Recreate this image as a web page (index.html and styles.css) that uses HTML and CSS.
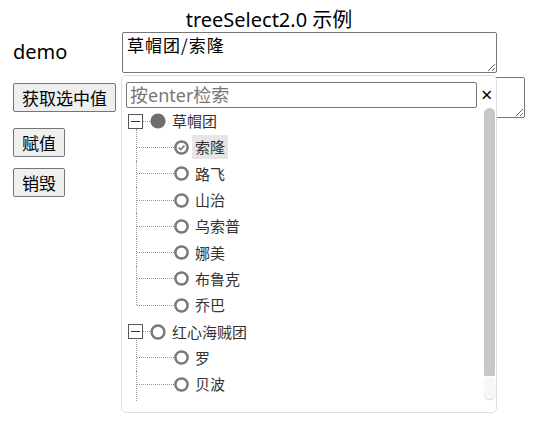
FILE: index.html
```html
<!DOCTYPE html>
<html lang="zh">
<head>
<meta charset="utf-8">
<title>treeSelect2.0 示例</title>
<link rel="stylesheet" href="styles.css">
</head>
<body>
<h1 class="title">treeSelect2.0 示例</h1>
<div class="main">
  <div class="side">
    <div class="label">demo</div>
    <button class="btn btn-get">获取选中值</button>
    <button class="btn btn-set">赋值</button>
    <button class="btn btn-destroy">销毁</button>
  </div>
  <div class="fields">
    <textarea class="area area-1">草帽团/索隆</textarea>
    <textarea class="area area-2"></textarea>
    <div class="dropdown">
      <div class="search">
        <input class="search-input" type="text" placeholder="按enter检索">
        <span class="close">×</span>
      </div>
      <div class="list-wrap">
        <div class="list">
          <ul class="tree">
            <li class="group">
              <div class="row">
                <span class="switch"></span><span class="hconn-top"></span>
                <svg class="dot" width="16" height="16" viewBox="0 0 16 16"><circle cx="8" cy="8" r="7.6" fill="#6e6e6e"/></svg>
                <span class="text">草帽团</span>
              </div>
              <ul class="children">
                <li class="child"><div class="row"><span class="hconn"></span><svg class="radio" width="15" height="15" viewBox="0 0 15 15"><circle cx="7.5" cy="7.5" r="6.1" fill="none" stroke="#7a7a7a" stroke-width="2.5"/><path d="M4.6 7.6 L6.7 9.6 L10.4 5.7" fill="none" stroke="#7a7a7a" stroke-width="1.7"/></svg><span class="text selected">索隆</span></div></li>
                <li class="child"><div class="row"><span class="hconn"></span><svg class="radio" width="15" height="15" viewBox="0 0 15 15"><circle cx="7.5" cy="7.5" r="6.1" fill="none" stroke="#7a7a7a" stroke-width="2.5"/></svg><span class="text">路飞</span></div></li>
                <li class="child"><div class="row"><span class="hconn"></span><svg class="radio" width="15" height="15" viewBox="0 0 15 15"><circle cx="7.5" cy="7.5" r="6.1" fill="none" stroke="#7a7a7a" stroke-width="2.5"/></svg><span class="text">山治</span></div></li>
                <li class="child"><div class="row"><span class="hconn"></span><svg class="radio" width="15" height="15" viewBox="0 0 15 15"><circle cx="7.5" cy="7.5" r="6.1" fill="none" stroke="#7a7a7a" stroke-width="2.5"/></svg><span class="text">乌索普</span></div></li>
                <li class="child"><div class="row"><span class="hconn"></span><svg class="radio" width="15" height="15" viewBox="0 0 15 15"><circle cx="7.5" cy="7.5" r="6.1" fill="none" stroke="#7a7a7a" stroke-width="2.5"/></svg><span class="text">娜美</span></div></li>
                <li class="child"><div class="row"><span class="hconn"></span><svg class="radio" width="15" height="15" viewBox="0 0 15 15"><circle cx="7.5" cy="7.5" r="6.1" fill="none" stroke="#7a7a7a" stroke-width="2.5"/></svg><span class="text">布鲁克</span></div></li>
                <li class="child"><div class="row"><span class="hconn"></span><svg class="radio" width="15" height="15" viewBox="0 0 15 15"><circle cx="7.5" cy="7.5" r="6.1" fill="none" stroke="#7a7a7a" stroke-width="2.5"/></svg><span class="text">乔巴</span></div></li>
              </ul>
            </li>
            <li class="group">
              <div class="row">
                <span class="switch"></span><span class="hconn-top"></span>
                <svg class="dot" width="16" height="16" viewBox="0 0 16 16"><circle cx="8" cy="8" r="6.4" fill="none" stroke="#7a7a7a" stroke-width="2.5"/></svg>
                <span class="text">红心海贼团</span>
              </div>
              <ul class="children more">
                <li class="child"><div class="row"><span class="hconn"></span><svg class="radio" width="15" height="15" viewBox="0 0 15 15"><circle cx="7.5" cy="7.5" r="6.1" fill="none" stroke="#7a7a7a" stroke-width="2.5"/></svg><span class="text">罗</span></div></li>
                <li class="child"><div class="row"><span class="hconn"></span><svg class="radio" width="15" height="15" viewBox="0 0 15 15"><circle cx="7.5" cy="7.5" r="6.1" fill="none" stroke="#7a7a7a" stroke-width="2.5"/></svg><span class="text">贝波</span></div></li>
              </ul>
            </li>
          </ul>
        </div>
        <div class="scrollbar">
          <div class="scroll-thumb"></div>
          <div class="scroll-end"></div>
        </div>
      </div>
    </div>
  </div>
</div>
</body>
</html>
```
FILE: styles.css
```css
html {
  min-height: 100%;
}

body {
  margin: 8px;
  min-height: 408px;
  font-family: "Noto Sans", "Noto Sans CJK SC", sans-serif;
  color: #000;
  background: #fff;
}

.title {
  margin: 0;
  font-size: 20px;
  font-weight: normal;
  line-height: 24px;
  text-align: center;
}

.main {
  display: flex;
  min-height: 384px;
}

.side {
  width: 114px;
  box-sizing: border-box;
  padding-left: 5px;
  display: flex;
  flex-direction: column;
  align-items: flex-start;
}

.label {
  height: 40px;
  line-height: 40px;
  font-size: 20px;
}

.btn {
  height: 29px;
  padding: 0 8px;
  font-family: "Noto Sans CJK SC", sans-serif;
  font-size: 17px;
  color: #000;
  background: #efefef;
  border: 1px solid #767676;
  border-radius: 2px;
}

.btn-get { margin-top: 11px; }
.btn-set { margin-top: 16px; }
.btn-destroy { margin-top: 11px; }

.fields {
  position: relative;
  display: flex;
  flex-direction: column;
  align-items: flex-start;
  min-height: 384px;
}

.area {
  display: block;
  box-sizing: border-box;
  width: 375px;
  height: 41px;
  margin: 0;
  padding: 2px 4px;
  font-family: "Noto Sans CJK SC", sans-serif;
  font-size: 17px;
  line-height: 20px;
  letter-spacing: 1px;
  border: 1px solid #767676;
  border-radius: 2px;
}

.area-2 {
  margin-top: 4px;
  margin-left: 28px;
}

.dropdown {
  position: absolute;
  top: 43px;
  left: -1px;
  width: 376px;
  height: 338px;
  box-sizing: border-box;
  border: 1px solid #dedede;
  border-radius: 5px;
  background: #fff;
}

.search {
  display: flex;
  align-items: center;
  padding: 6px 0 0 4px;
}

.search-input {
  box-sizing: border-box;
  width: 351px;
  height: 26px;
  margin: 0;
  padding: 0 3px;
  font-family: "Noto Sans", "Noto Sans CJK SC", sans-serif;
  font-size: 18px;
  border: 1px solid #767676;
  border-radius: 2px;
  outline: none;
}

.search-input::placeholder {
  color: #777;
}

.close {
  margin-left: 4px;
  font-size: 20px;
  line-height: 20px;
  color: #000;
}

.list-wrap {
  position: relative;
}

.list {
  height: 293px;
  overflow: hidden;
}

.scrollbar {
  position: absolute;
  top: 0;
  right: 1px;
  width: 11px;
  height: 293px;
  display: flex;
  flex-direction: column;
}

.scroll-thumb {
  height: 268px;
  background: #c8c8c8;
  border-radius: 6px 6px 2px 2px;
}

.scroll-end {
  height: 22px;
  margin-top: 1px;
  background: #f7f7f7;
  border-radius: 2px 2px 6px 6px;
  box-shadow: 0 1px 1px #d8d8d8;
}

.tree, .children {
  list-style: none;
  margin: 0;
  padding: 0;
}

.tree {
  padding-left: 6px;
  padding-bottom: 27px;
}

.row {
  display: flex;
  align-items: center;
  height: 26.3px;
  font-family: "Noto Sans CJK SC", sans-serif;
  font-size: 15px;
  color: #333;
}

.switch {
  position: relative;
  box-sizing: border-box;
  width: 15px;
  height: 15px;
  border: 1px solid #555;
  background: #fff;
  flex: none;
}

.switch::after {
  content: "";
  position: absolute;
  left: 2px;
  right: 2px;
  top: 6px;
  height: 1px;
  background: #333;
}

.hconn-top {
  width: 7px;
  border-top: 1px dotted #999;
  flex: none;
}

.dot, .radio {
  flex: none;
  display: block;
}

.text {
  margin-left: 3px;
  padding: 0 3px;
  height: 24px;
  line-height: 24px;
  white-space: nowrap;
}

.selected {
  background: #e6e6e6;
}

.children {
  margin-left: 8px;
}

.child {
  position: relative;
  padding-left: 1px;
}

.child::before {
  content: "";
  position: absolute;
  left: 0;
  top: 0;
  bottom: 0;
  border-left: 1px dotted #999;
}

.child:first-child::before {
  top: -5px;
}

.child:last-child::before {
  bottom: 13px;
}

.more .child:last-child::before {
  bottom: -26px;
}

.hconn {
  width: 37px;
  border-top: 1px dotted #999;
  flex: none;
}

.child .text {
  margin-left: 3px;
}
```
